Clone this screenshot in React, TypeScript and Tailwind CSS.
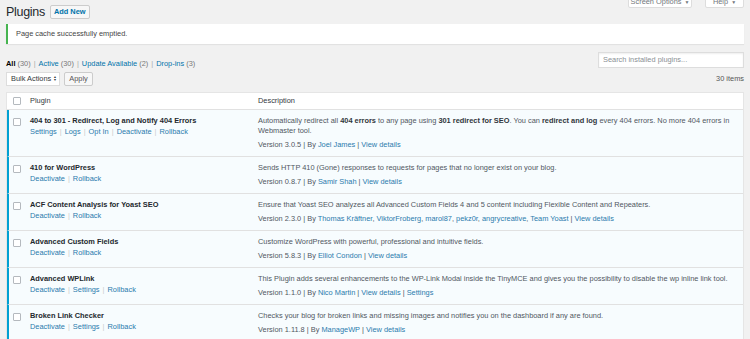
import React from 'react';

type Plugin = {
  name: string;
  actions: string[];
  desc: React.ReactNode;
  version: string;
  authors: string[];
  extra: string[];
};

const plugins: Plugin[] = [
  {
    name: '404 to 301 - Redirect, Log and Notify 404 Errors',
    actions: ['Settings', 'Logs', 'Opt In', 'Deactivate', 'Rollback'],
    desc: (
      <>
        Automatically redirect all <b className="font-bold text-[#32373c]">404 errors</b> to any page using{' '}
        <b className="font-bold text-[#32373c]">301 redirect for SEO</b>. You can{' '}
        <b className="font-bold text-[#32373c]">redirect and log</b> every 404 errors. No more 404 errors in Webmaster tool.
      </>
    ),
    version: '3.0.5',
    authors: ['Joel James'],
    extra: ['View details'],
  },
  {
    name: '410 for WordPress',
    actions: ['Deactivate', 'Rollback'],
    desc: 'Sends HTTP 410 (Gone) responses to requests for pages that no longer exist on your blog.',
    version: '0.8.7',
    authors: ['Samir Shah'],
    extra: ['View details'],
  },
  {
    name: 'ACF Content Analysis for Yoast SEO',
    actions: ['Deactivate', 'Rollback'],
    desc: 'Ensure that Yoast SEO analyzes all Advanced Custom Fields 4 and 5 content including Flexible Content and Repeaters.',
    version: '2.3.0',
    authors: ['Thomas Kräftner', 'ViktorFroberg', 'marol87', 'pekz0r', 'angrycreative', 'Team Yoast'],
    extra: ['View details'],
  },
  {
    name: 'Advanced Custom Fields',
    actions: ['Deactivate', 'Rollback'],
    desc: 'Customize WordPress with powerful, professional and intuitive fields.',
    version: '5.8.3',
    authors: ['Elliot Condon'],
    extra: ['View details'],
  },
  {
    name: 'Advanced WPLink',
    actions: ['Deactivate', 'Settings', 'Rollback'],
    desc: 'This Plugin adds several enhancements to the WP-Link Modal inside the TinyMCE and gives you the possibility to disable the wp inline link tool.',
    version: '1.1.0',
    authors: ['Nico Martin'],
    extra: ['View details', 'Settings'],
  },
  {
    name: 'Broken Link Checker',
    actions: ['Deactivate', 'Settings', 'Rollback'],
    desc: 'Checks your blog for broken links and missing images and notifies you on the dashboard if any are found.',
    version: '1.11.8',
    authors: ['ManageWP'],
    extra: ['View details'],
  },
];

const Checkbox = () => (
  <span className="block w-[8px] h-[8px] bg-white border border-[#b4b9be] rounded-[1px]" />
);

const App: React.FC = () => {
  return (
    <div className="w-[750px] h-[339px] overflow-hidden bg-[#f1f1f1] text-[#444] font-['Liberation_Sans',Arial,sans-serif] text-[7.4px] leading-[10px]">
      <div className="pl-[6px] pr-[6px]">
        {/* Title row */}
        <div className="flex items-start justify-between h-[24px]">
          <div className="flex items-center gap-[5px] pt-[4px]">
            <h1 className="text-[12.5px] leading-[16px] tracking-[-0.3px] text-[#23282d]">Plugins</h1>
            <span className="h-[14px] px-[3px] flex items-center border border-[#ccc] bg-[#f7f7f7] rounded-[2px] text-[#0073aa] font-bold text-[7.4px]">
              Add New
            </span>
          </div>
          <div className="flex gap-[13px] -mt-[4px]">
            <span className="h-[12px] w-[64px] pb-[1px] flex items-end justify-center bg-white border border-[#ddd] rounded-b-[2px] text-[#72777c] gap-[3px] whitespace-nowrap leading-[8px]">
              Screen Options <span className="text-[5px] leading-[8px]">▼</span>
            </span>
            <span className="h-[12px] w-[39px] pb-[1px] flex items-end justify-center bg-white border border-[#ddd] rounded-b-[2px] text-[#72777c] gap-[3px] leading-[8px]">
              Help <span className="text-[5px] leading-[8px]">▼</span>
            </span>
          </div>
        </div>

        {/* Notice */}
        <div className="h-[20px] bg-white border-l-[2px] border-[#46b450] shadow-[0_1px_1px_rgba(0,0,0,0.06)] flex items-center pl-[8px] text-[#444]">
          Page cache successfully emptied.
        </div>

        {/* Filters + search */}
        <div className="flex items-start justify-between mt-[8px] h-[16px]">
          <div className="pt-[7px] flex items-center gap-[3px] text-[#777]">
            <span><b className="font-bold text-[#000]">All</b> (30)</span>
            <span className="text-[#aaa]">|</span>
            <span><span className="text-[#0073aa]">Active</span> (30)</span>
            <span className="text-[#aaa]">|</span>
            <span><span className="text-[#0073aa]">Update Available</span> (2)</span>
            <span className="text-[#aaa]">|</span>
            <span><span className="text-[#0073aa]">Drop-ins</span> (3)</span>
          </div>
          <div className="w-[146px] h-[16px] bg-white border border-[#ddd] shadow-[inset_0_1px_2px_rgba(0,0,0,0.07)] flex items-center pl-[4px] text-[#8a8f94]">
            Search installed plugins...
          </div>
        </div>

        {/* Tablenav */}
        <div className="flex items-center justify-between mt-[4px] h-[14px]">
          <div className="flex items-center gap-[4px]">
            <span className="h-[14px] w-[54px] flex items-center gap-[2px] pl-[4px] bg-white border border-[#ddd] text-[#32373c] whitespace-nowrap">
              Bulk Actions
              <span className="flex flex-col text-[3.5px] leading-[3.5px]">
                <span>▲</span>
                <span>▼</span>
              </span>
            </span>
            <span className="h-[14px] w-[29px] flex items-center justify-center border border-[#ccc] bg-[#f7f7f7] rounded-[2px] text-[#555]">
              Apply
            </span>
          </div>
          <span className="text-[#555]">30 items</span>
        </div>

        {/* Table */}
        <div className="mt-[6px] bg-white border border-[#e5e5e5]">
          <div className="flex h-[17px] items-center border-b border-[#e1e1e1] text-[#32373c]">
            <div className="w-[22px] pl-[6px] flex items-center">
              <Checkbox />
            </div>
            <div className="w-[224px] pl-[1px]">Plugin</div>
            <div className="flex-1 pl-[5px]">Description</div>
          </div>
          {plugins.map((p) => (
            <div key={p.name} className="flex bg-[#f7fcfe] border-l-[2px] border-[#00a0d2] border-b border-b-[#e1e1e1] pt-[6px] pb-[6px]">
              <div className="w-[20px] pl-[4px] pt-[2px]">
                <Checkbox />
              </div>
              <div className="w-[224px] pl-[1px]">
                <div className="font-bold text-[#23282d]">{p.name}</div>
                <div className="mt-[1px] text-[#2a7bad] flex gap-[3px]">
                  {p.actions.map((a, i) => (
                    <React.Fragment key={a}>
                      {i > 0 && <span className="text-[#ccc]">|</span>}
                      <span>{a}</span>
                    </React.Fragment>
                  ))}
                </div>
              </div>
              <div className="flex-1 pl-[5px] pr-[8px] text-[#50575e]">
                <p>{p.desc}</p>
                <p className="mt-[4px]">
                  Version {p.version} | By{' '}
                  {p.authors.map((a, i) => (
                    <React.Fragment key={a}>
                      {i > 0 && ', '}
                      <span className="text-[#2a7bad]">{a}</span>
                    </React.Fragment>
                  ))}
                  {p.extra.map((e) => (
                    <React.Fragment key={e}>
                      {' | '}
                      <span className="text-[#2a7bad]">{e}</span>
                    </React.Fragment>
                  ))}
                </p>
              </div>
            </div>
          ))}
        </div>
      </div>
    </div>
  );
};

export default App;
